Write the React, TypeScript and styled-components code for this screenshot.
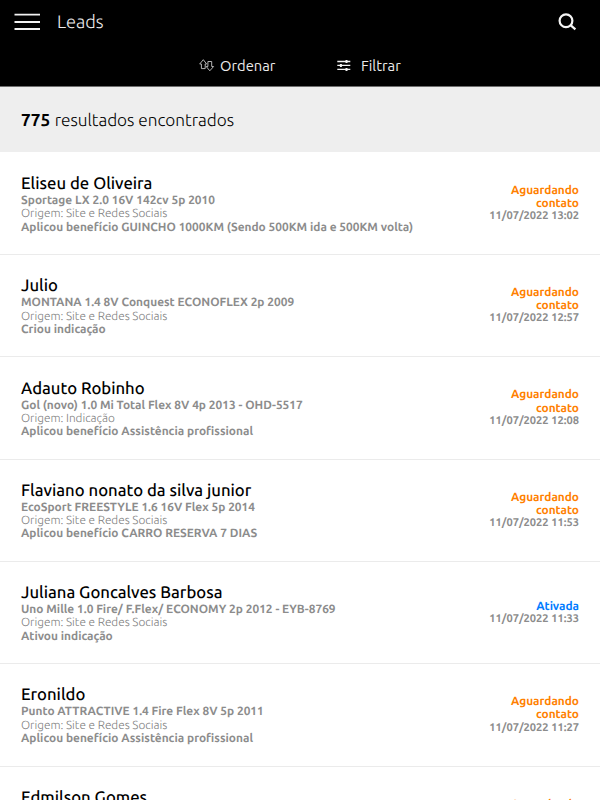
import React from 'react';
import styled, { createGlobalStyle } from 'styled-components';

const GlobalStyle = createGlobalStyle`
  * { box-sizing: border-box; }
  html, body { margin: 0; height: 100%; overflow: hidden; background: #fff; }
  body { font-family: Ubuntu, "Noto Sans", sans-serif; text-rendering: geometricPrecision; }
`;

const Page = styled.div`
  width: 600px;
  height: 800px;
  overflow: hidden;
  background: #fff;
  color: #000;
`;

const Header = styled.header`
  height: 87px;
  background: #000;
  color: #ececec;
  border-bottom: 1px solid #6e6e6e;
`;

const TitleBar = styled.div`
  height: 43px;
  display: flex;
  align-items: center;
  padding: 0 23px 0 14px;
`;

const Title = styled.h1`
  flex: 1;
  margin: 0 0 0 16px;
  font-size: 18.2px;
  font-weight: 300;
  line-height: 24px;
`;

const Actions = styled.div`
  height: 43px;
  display: flex;
  align-items: center;
  padding: 1px 0 0 199px;
`;

const Action = styled.button<{ $gap: number; $width: number }>`
  display: flex;
  align-items: center;
  gap: ${(p) => p.$gap}px;
  width: ${(p) => p.$width}px;
  padding: 0;
  border: 0;
  background: none;
  color: inherit;
  font: 400 14.75px/21px Ubuntu, "Noto Sans", sans-serif;
  white-space: nowrap;
`;

const Summary = styled.div`
  height: 65px;
  padding: 2px 21px 0;
  display: flex;
  align-items: center;
  gap: 4.6px;
  background: #eee;
  font-size: 17.2px;
  line-height: 24px;
`;

const Count = styled.strong`
  font-weight: 700;
`;

const SummaryText = styled.span`
  font-weight: 300;
`;

const List = styled.main`
  padding-top: 0.8px;
`;

const LeadRow = styled.article`
  height: 102.3px;
  padding: 0 21px;
  display: flex;
  align-items: center;
  justify-content: space-between;
  border-bottom: 1px solid #ebebeb;
  white-space: nowrap;
`;

const Details = styled.div`
  display: flex;
  flex-direction: column;
  padding-top: 1px;
`;

const Name = styled.h2`
  margin: 0;
  padding-bottom: 1px;
  font-size: 16.7px;
  font-weight: 500;
  line-height: 19px;
`;

const Info = styled.div`
  color: #8c8c8c;
  font-size: 11.9px;
  font-weight: 700;
  line-height: 13.3px;
`;

const Origin = styled(Info)`
  color: #808080;
  font-size: 11.8px;
  font-weight: 300;
`;

const StatusColumn = styled.div`
  width: 92px;
  text-align: right;
  white-space: normal;
`;

const Status = styled.div<{ $active: boolean }>`
  color: ${(p) => (p.$active ? '#007bff' : '#ff8000')};
  font-size: 11.85px;
  font-weight: 700;
  line-height: 13.2px;
`;

const DateText = styled.time`
  display: block;
  color: #8c8c8c;
  font-size: 11.1px;
  font-weight: 700;
  line-height: 13px;
  white-space: nowrap;
`;

interface Lead {
  name: string;
  car: string;
  origin: string;
  event: string;
  time: string;
  active?: boolean;
}

const SITE = 'Origem: Site e Redes Sociais';

const leads: Lead[] = [
  {
    name: 'Eliseu de Oliveira',
    car: 'Sportage LX 2.0 16V 142cv 5p 2010',
    origin: SITE,
    event: 'Aplicou benefício GUINCHO 1000KM (Sendo 500KM ida e 500KM volta)',
    time: '13:02',
  },
  {
    name: 'Julio',
    car: 'MONTANA 1.4 8V Conquest ECONOFLEX 2p 2009',
    origin: SITE,
    event: 'Criou indicação',
    time: '12:57',
  },
  {
    name: 'Adauto Robinho',
    car: 'Gol (novo) 1.0 Mi Total Flex 8V 4p 2013 - OHD-5517',
    origin: 'Origem: Indicação',
    event: 'Aplicou benefício Assistência profissional',
    time: '12:08',
  },
  {
    name: 'Flaviano nonato da silva junior',
    car: 'EcoSport FREESTYLE 1.6 16V Flex 5p 2014',
    origin: SITE,
    event: 'Aplicou benefício CARRO RESERVA 7 DIAS',
    time: '11:53',
  },
  {
    name: 'Juliana Goncalves Barbosa',
    car: 'Uno Mille 1.0 Fire/ F.Flex/ ECONOMY 2p 2012 - EYB-8769',
    origin: SITE,
    event: 'Ativou indicação',
    time: '11:33',
    active: true,
  },
  {
    name: 'Eronildo',
    car: 'Punto ATTRACTIVE 1.4 Fire Flex 8V 5p 2011',
    origin: SITE,
    event: 'Aplicou benefício Assistência profissional',
    time: '11:27',
  },
];

const MenuIcon = () => (
  <svg width="27" height="18" viewBox="0 0 27 18" stroke="#f2f2f2" strokeWidth="1.8">
    <path d="M.5 1.6H26M.5 9H26M.5 16H26" />
  </svg>
);

const SearchIcon = () => (
  <svg width="20" height="18" viewBox="0 0 20 18" fill="none" stroke="#f4f4f4" strokeWidth="2.2">
    <circle cx="9" cy="7.8" r="6.4" />
    <path d="M13.8 12.4L18.4 16.4" />
  </svg>
);

const SortIcon = () => (
  <svg width="16" height="13" viewBox="0 0 16 13" fill="none" stroke="#b4b4b4" strokeWidth="1" strokeLinejoin="round">
    <path d="M4.3 .7L.7 5H2.4V9.6H6.2V5H7.6Z" />
    <path d="M8.9 2.5H12.7V7.5H14.6L10.8 11.8L7.2 7.5H8.9Z" />
  </svg>
);

const FilterIcon = () => (
  <svg width="14" height="11" viewBox="0 0 14 11" stroke="#f2f2f2" strokeWidth="1.4">
    <path d="M.3 1.5H13.3M.3 5.4H13.3M.3 9.4H13.3" />
    <path d="M9.5 0V3M3.9 3.9V6.9M9.5 7.9V10.9" strokeWidth="2" />
  </svg>
);

const Stamp = ({ active, time }: { active?: boolean; time?: string }) => (
  <StatusColumn>
    <Status $active={!!active}>{active ? 'Ativada' : 'Aguardando contato'}</Status>
    <DateText>{time ? `11/07/2022 ${time}` : '\u00a0'}</DateText>
  </StatusColumn>
);

const LeadItem = ({ lead }: { lead: Lead }) => (
  <LeadRow>
    <Details>
      <Name>{lead.name}</Name>
      <Info>{lead.car}</Info>
      <Origin>{lead.origin}</Origin>
      <Info>{lead.event}</Info>
    </Details>
    <Stamp active={lead.active} time={lead.time} />
  </LeadRow>
);

export default function App() {
  return (
    <Page>
      <GlobalStyle />
      <Header>
        <TitleBar>
          <MenuIcon />
          <Title>Leads</Title>
          <SearchIcon />
        </TitleBar>
        <Actions>
          <Action $gap={5} $width={138}>
            <SortIcon />
            Ordenar
          </Action>
          <Action $gap={10} $width={70}>
            <FilterIcon />
            Filtrar
          </Action>
        </Actions>
      </Header>
      <Summary>
        <Count>775</Count>
        <SummaryText>resultados encontrados</SummaryText>
      </Summary>
      <List>
        {leads.map((lead) => (
          <LeadItem key={lead.name} lead={lead} />
        ))}
        <LeadRow>
          <Details>
            <Name>Edmilson Gomes</Name>
            <Info>&nbsp;</Info>
            <Info>&nbsp;</Info>
            <Info>&nbsp;</Info>
          </Details>
          <Stamp />
        </LeadRow>
      </List>
    </Page>
  );
}
